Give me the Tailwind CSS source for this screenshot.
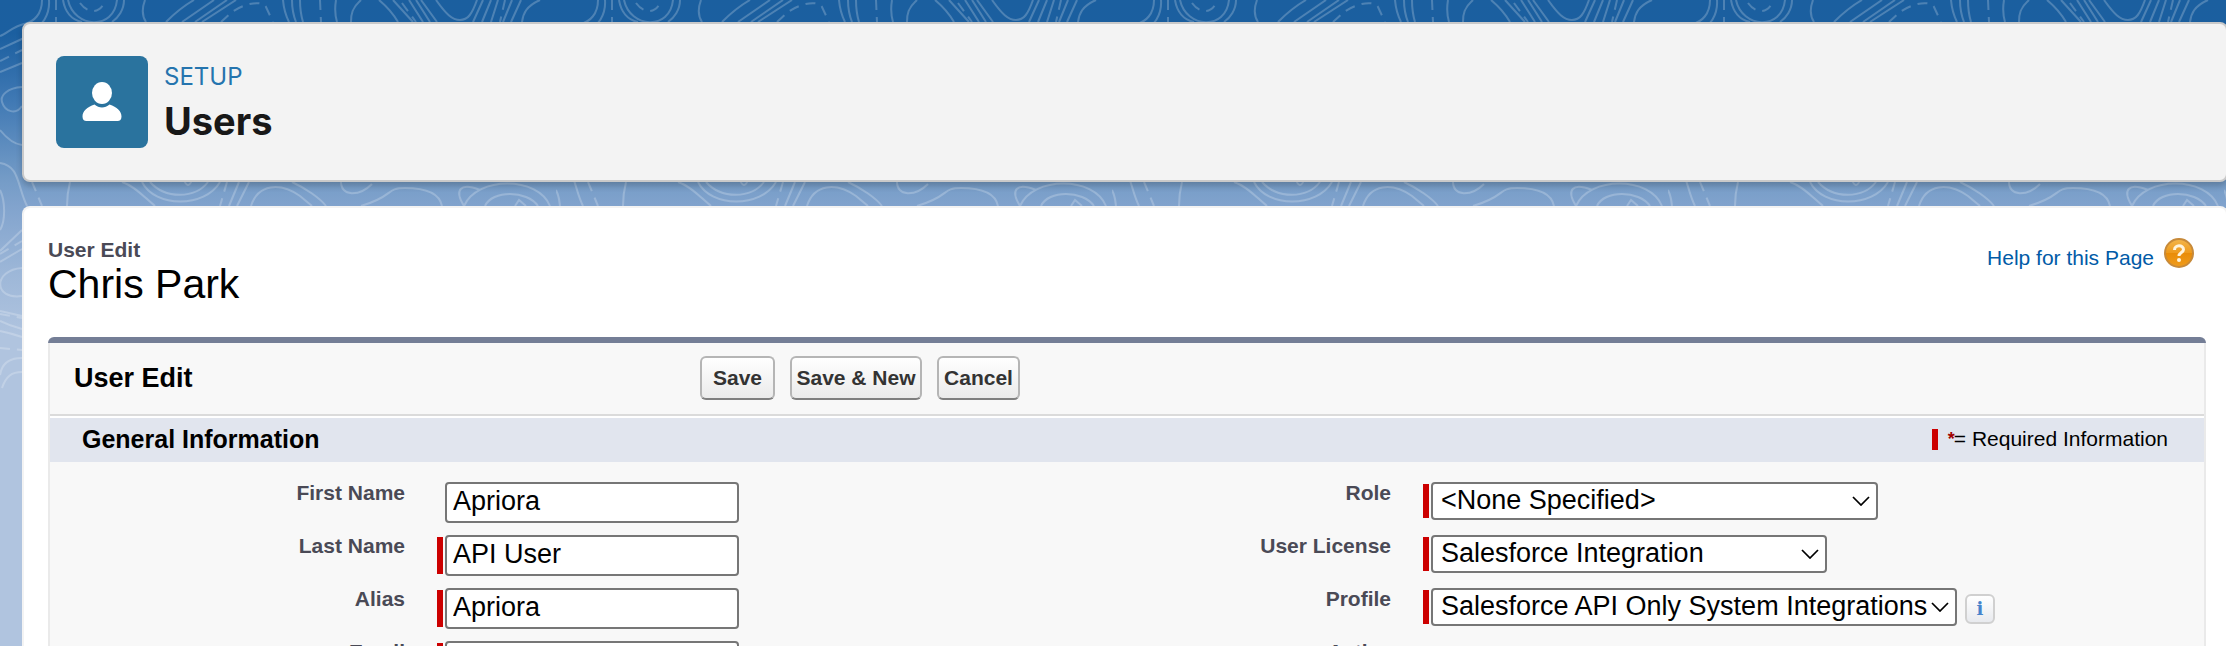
<!DOCTYPE html>
<html lang="en">
<head>
  <meta charset="UTF-8" />
  <meta name="viewport" content="width=device-width, initial-scale=1.0" />
  <title>Users - Setup</title>
  <script src="https://cdn.jsdelivr.net/npm/@tailwindcss/browser@4"></script>
</head>
<body class="relative isolate h-screen overflow-hidden bg-[#b0c4df] text-black font-['Liberation_Sans',Arial,sans-serif]">

  <!-- contour lines behind the cards -->
  <svg class="absolute inset-x-0 top-0 -z-10 h-[420px] w-full" aria-hidden="true">
    <defs>
      <linearGradient id="sky" x1="0" y1="0" x2="0" y2="1">
        <stop offset="0" stop-color="#1b5f9f" />
        <stop offset="0.08" stop-color="#1b5fa0" />
        <stop offset="0.24" stop-color="#4079b4" />
        <stop offset="0.43" stop-color="#759cc7" />
        <stop offset="0.49" stop-color="#81a3cd" />
        <stop offset="0.65" stop-color="#9db7d8" />
        <stop offset="0.8" stop-color="#b0c4df" />
        <stop offset="1" stop-color="#b0c4df" />
      </linearGradient>
      <pattern id="contours" width="556" height="420" patternUnits="userSpaceOnUse">
        <g fill="none" stroke="#fff" stroke-opacity="0.22" stroke-width="2">
          <path d="M42 0C42 14 34 22 24 24S6 34 0 36M49 0C50 14 44 26 24 38L0 49M0 72L22 63M22 87C8 88 0 95 2 102C5 112 16 115 22 106M0 130C8 140 14 144 22 145M0 163C20 166 17 186 27 206M0 190C5 200 6 220 0 230" />
          <path d="M0 251L22 230M0 262L22 249M22 268C-7 270 -7 300 22 296M0 311L22 316M0 321Q10 326 22 329M0 331Q10 333 22 337M0 375C2 362 12 358 22 358M2 388C6 376 12 372 22 372" />
          <path d="M63 0C65 12 72 20 82 22M68 0C74 28 114 31 117 0M124 0C124 10 118 18 112 22M145 0C142 8 142 16 146 22M194 0Q180 8 166 22M214 0L182 22M227 0L195 22M236 0L202 22" />
          <path d="M283 0Q284 12 289 22M292 0Q292 12 296 22M300 0Q300 12 303 22M336 0Q334 12 337 22M361 0C352 8 351 14 351 22M379 0Q391 10 398 22M393 0L413 22M409 0L423 22M416 0L430 22M421 0L437 22" />
          <path d="M436 0C446 14 452 20 460 20S472 14 477 0M483 0L473 22M491 0L482 22M498 0L491 22M512 0L503 22M521 0L511 22M540 0C526 6 523 14 522 22" />
          <path d="M70 182C68 190 67 200 67 206M122 182C135 186 145 198 155 206M142 182C155 208 205 208 220 182M150 182C165 199 195 199 208 182M184 180Q188 190 192 180M239 182L229 206M249 182L237 206M251 206C258 184 280 182 300 196L312 206M292 182C305 188 320 198 326 206" />
          <path d="M341 180C340 198 360 196 372 184M361 206C395 196 385 188 405 188C430 188 440 196 442 206M464 206C454 190 460 182 480 190M464 206C477 176 538 176 550 206M485 206C492 190 527 190 538 206M515 206L519 200L526 206" />
          <path stroke-dasharray="10 7" d="M56 0V22M80 3C88 14 100 14 105 1M221 22L232 12C245 3 262 0 266 7L273 22M320 0L321 22M402 3L416 22M505 0L500 22M0 61L22 50M32 182L42 206M227 182L220 206M0 254L22 241M0 314L22 318M0 348L22 350" />
        </g>
      </pattern>
    </defs>
    <rect width="100%" height="100%" fill="url(#sky)" />
    <rect width="100%" height="100%" fill="url(#contours)" />
  </svg>

  <div class="-mr-0.5 flex flex-col gap-6 pt-[22px] pl-[22px]">

    <header class="flex h-40 items-center gap-4 rounded-lg border-2 border-[#c9c9c9] bg-[#f3f3f3] px-8 shadow-[0_4px_6px_rgba(0,0,0,0.2)] font-[Inter,sans-serif]">
      <span class="flex size-[92px] items-center justify-center rounded-lg bg-[#2a739e]">
        <svg class="size-10" viewBox="0 0 40 40" fill="#fff" aria-hidden="true">
          <ellipse cx="20" cy="11" rx="10" ry="11" />
          <path d="M12.500 22.500C17 26.500 23 26.500 27.500 22.500C35 25 39.500 29 39.500 34.500C39.500 37.500 38 39 35.500 39H4.500C2 39 0.500 37.500 0.500 34.500C0.500 29 5 25 12.500 22.500Z" />
        </svg>
      </span>
      <div class="pt-0.5">
        <p class="text-[24px] leading-9 text-[#2574ae]">SETUP</p>
        <h1 class="text-[38px] leading-[52px] font-bold text-[#181818]">Users</h1>
      </div>
    </header>

    <main class="rounded-t-lg border-2 border-b-0 border-[#f3f3f3] bg-white pt-[30px] pr-5 pl-6">
      <div class="flex items-start justify-between pr-3">
        <div>
          <p class="text-[21px] leading-6 font-bold text-[#4a4a56]">User Edit</p>
          <h2 class="text-[41px] leading-11 text-black">Chris Park</h2>
        </div>
        <a href="#" class="flex gap-2.5 text-[21px] leading-10 text-[#015ba7]">
          Help for this Page
          <svg class="size-[30px]" viewBox="0 0 30 30" aria-hidden="true">
            <defs>
              <linearGradient id="amber" x1="0" y1="0" x2="0" y2="1">
                <stop offset="0" stop-color="#f3b64c" />
                <stop offset="0.5" stop-color="#ee9a1c" />
                <stop offset="0.51" stop-color="#e98c08" />
                <stop offset="1" stop-color="#f09c1c" />
              </linearGradient>
            </defs>
            <circle cx="15" cy="15" r="14" fill="url(#amber)" stroke="#c78a3a" stroke-width="2" />
            <path d="M10.500 12C10.500 6.500 19.500 6.500 19.500 11.500C19.500 14.500 15 14.500 15 18" fill="none" stroke="#fff4dc" stroke-width="3" />
            <circle cx="15" cy="22" r="2" fill="#fff4dc" />
          </svg>
        </a>
      </div>

      <form class="mt-[31px]">
        <div class="h-1.5 rounded-t-lg bg-[#747e96]"></div>
        <div class="border-x-2 border-[#eaeaea] bg-[#f8f8f8]">
          <div class="grid h-[73px] grid-cols-[650fr_1504fr] items-center border-b-2 border-[#dbdbdb] pb-0.5">
            <h2 class="pl-6 text-[27px] leading-8 font-bold">User Edit</h2>
            <div class="flex gap-[15px] text-[21px] font-bold text-[#333]">
              <button type="button" class="h-11 w-[75px] rounded-md border-2 border-[#b5b5b5] border-b-[#7f7f7f] bg-linear-to-b from-white to-[#ebebeb]">Save</button>
              <button type="button" class="h-11 w-[132px] rounded-md border-2 border-[#b5b5b5] border-b-[#7f7f7f] bg-linear-to-b from-white to-[#ebebeb]">Save &amp; New</button>
              <button type="button" class="h-11 w-[83px] rounded-md border-2 border-[#b5b5b5] border-b-[#7f7f7f] bg-linear-to-b from-white to-[#ebebeb]">Cancel</button>
            </div>
          </div>

          <div class="flex h-[46px] items-center justify-between border-t-2 border-white bg-[#e1e5ee] pr-9 pb-0.5 pl-8">
            <h3 class="text-[25px] leading-8 font-bold">General Information</h3>
            <p class="flex items-center text-[21px] leading-6"><span class="mr-2.5 h-[21px] w-1.5 bg-[#c00]"></span><span class="w-1.5 text-[18px] leading-5 font-bold text-[#a00000]">*</span>= Required Information</p>
          </div>

          <div class="grid auto-rows-[53px] grid-cols-[355fr_631fr_355fr_813fr] items-start pt-5 text-[27px]">
            <label for="firstName" class="text-right text-[21px] leading-[22px] font-bold text-[#4a4a56]">First Name</label>
            <div class="pl-10">
              <input id="firstName" type="text" value="Apriora" class="block h-[41px] w-[294px] rounded border-2 border-[#767676] bg-white px-1.5 pb-0.5" />
            </div>
            <label for="role" class="text-right text-[21px] leading-[22px] font-bold text-[#4a4a56]">Role</label>
            <div class="flex gap-0.5 pl-8">
              <span class="mt-0.5 h-[34px] w-1.5 bg-[#c00]"></span>
              <span class="relative">
                <select id="role" class="block h-[38px] w-[447px] appearance-none rounded border-2 border-[#767676] bg-white pb-0.5 pl-2 leading-8"><option>&lt;None Specified&gt;</option></select>
                <svg class="pointer-events-none absolute top-3.5 right-2 h-2.5 w-[18px]" viewBox="0 0 18 10" fill="none" stroke="#000" stroke-width="1.75"><path d="M1 1L9 9L17 1" /></svg>
              </span>
            </div>

            <label for="lastName" class="text-right text-[21px] leading-[22px] font-bold text-[#4a4a56]">Last Name</label>
            <div class="flex gap-0.5 pl-8">
              <span class="mt-0.5 h-[37px] w-1.5 bg-[#c00]"></span>
              <input id="lastName" type="text" value="API User" class="block h-[41px] w-[294px] rounded border-2 border-[#767676] bg-white px-1.5 pb-0.5" />
            </div>
            <label for="license" class="text-right text-[21px] leading-[22px] font-bold text-[#4a4a56]">User License</label>
            <div class="flex gap-0.5 pl-8">
              <span class="mt-0.5 h-[34px] w-1.5 bg-[#c00]"></span>
              <span class="relative">
                <select id="license" class="block h-[38px] w-[396px] appearance-none rounded border-2 border-[#767676] bg-white pb-0.5 pl-2 leading-8"><option>Salesforce Integration</option></select>
                <svg class="pointer-events-none absolute top-3.5 right-2 h-2.5 w-[18px]" viewBox="0 0 18 10" fill="none" stroke="#000" stroke-width="1.75"><path d="M1 1L9 9L17 1" /></svg>
              </span>
            </div>

            <label for="alias" class="text-right text-[21px] leading-[22px] font-bold text-[#4a4a56]">Alias</label>
            <div class="flex gap-0.5 pl-8">
              <span class="mt-0.5 h-[37px] w-1.5 bg-[#c00]"></span>
              <input id="alias" type="text" value="Apriora" class="block h-[41px] w-[294px] rounded border-2 border-[#767676] bg-white px-1.5 pb-0.5" />
            </div>
            <label for="profile" class="text-right text-[21px] leading-[22px] font-bold text-[#4a4a56]">Profile</label>
            <div class="flex gap-0.5 pl-8">
              <span class="mt-0.5 h-[34px] w-1.5 bg-[#c00]"></span>
              <span class="relative">
                <select id="profile" class="block h-[38px] w-[526px] appearance-none rounded border-2 border-[#767676] bg-white pb-0.5 pl-2 leading-8"><option>Salesforce API Only System Integrations</option></select>
                <svg class="pointer-events-none absolute top-3.5 right-2 h-2.5 w-[18px]" viewBox="0 0 18 10" fill="none" stroke="#000" stroke-width="1.75"><path d="M1 1L9 9L17 1" /></svg>
              </span>
              <button type="button" aria-label="Profile info" class="mt-1.5 ml-1.5 flex size-[30px] items-center justify-center rounded-md border-2 border-[#d0d0d0] bg-linear-to-b from-white to-[#e8eaee] font-['DejaVu_Serif',serif] text-[18px] leading-5 font-bold text-[#4583cc]">i</button>
            </div>

            <label for="email" class="text-right text-[21px] leading-[22px] font-bold text-[#4a4a56]">Email</label>
            <div class="flex gap-0.5 pl-8">
              <span class="mt-0.5 h-[37px] w-1.5 bg-[#c00]"></span>
              <input id="email" type="email" class="block h-[41px] w-[294px] rounded border-2 border-[#767676] bg-white px-1.5 pb-0.5" />
            </div>
            <label for="active" class="text-right text-[21px] leading-[22px] font-bold text-[#4a4a56]">Active</label>
            <div class="pt-2 pl-10">
              <input id="active" type="checkbox" checked class="block size-6" />
            </div>
          </div>
        </div>
      </form>
    </main>
  </div>
</body>
</html>
